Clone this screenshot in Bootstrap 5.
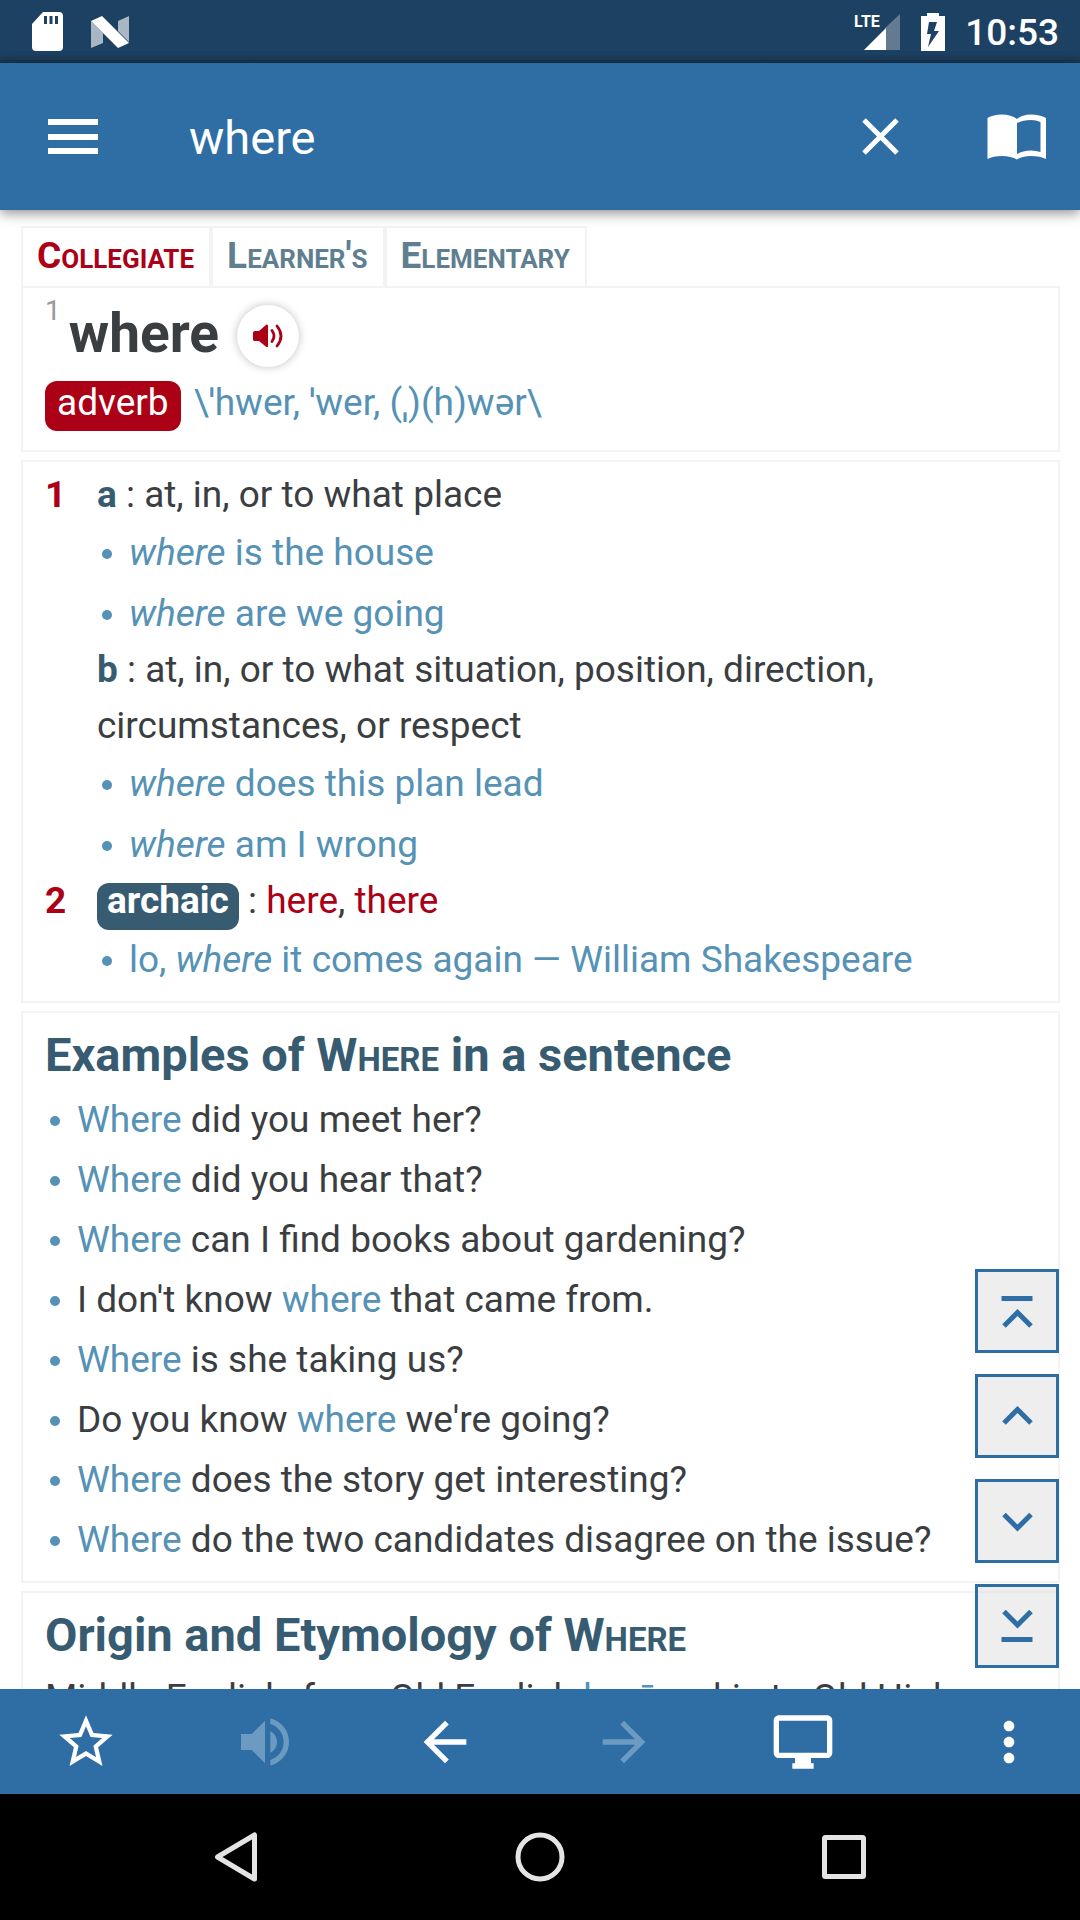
<!DOCTYPE html>
<html lang="en">
<head>
<meta charset="utf-8">
<meta name="viewport" content="width=device-width, initial-scale=1">
<title>where – Dictionary</title>
<link href="https://cdn.jsdelivr.net/npm/bootstrap@5.3.0/dist/css/bootstrap.min.css" rel="stylesheet">
<style>
:root { --app:#2e6ea5; --ink:#3b3e41; --soft:#5592b5; --deep:#375c71; --red:#ab0015; --rule:#f3f3f3; }
body { font-family: Roboto, "Noto Sans", sans-serif; font-size: 37px; line-height: 56px; color: var(--ink); background: #fff; }
svg { display: block; }
a { text-decoration: none; }
.statusbar { height: 63px; padding: 0 21px 0 32px; background: linear-gradient(#1d4162 54px, #19344e); color: #fff; }
.statusbar .battery { margin-left: 21px; }
.clock { font-size: 37px; line-height: 42px; font-weight: 500; padding-top: 2px; margin-left: 20px; }
.appbar { height: 147px; background: var(--app); box-shadow: 0 3px 12px rgba(0,0,0,.45); z-index: 2; padding: 0 25px 0 35px; }
.appbar .search, .appbar .search:focus { background: none; border: 0; box-shadow: none; color: #fff; font-size: 47px; line-height: 60px; padding: 2px 0 0; margin-left: 78px; }
.book { margin-left: 60px; }
.iconbtn { border: 0; padding: 0; background: none; color: #fff; }
.iconbtn:disabled { opacity: .3; border: 0; color: #fff; }
.reader { padding: 16px 20px 0 21px; }
.dict-tabs a { border: 2px solid var(--rule); border-bottom: 0; padding: 0 15px 0 14px; height: 60px; line-height: 56px; font-weight: 700; color: #5f7f90; }
.dict-tabs a.active { color: var(--red); }
.dict-tabs .caps { font-size: 26px; }
.caps { text-transform: uppercase; line-height: 1; }
.entry { border: 2px solid var(--rule); padding: 5px 22px 13px; margin-bottom: 8px; }
.entry-head { padding: 0 22px 19px; }
.headword { font-size: 55px; line-height: 66px; font-weight: 700; margin: 0 0 0 8px; padding-top: 12px; }
.homograph { font-size: 28px; line-height: 28px; color: #999; padding-top: 9px; }
.speak { width: 62px; height: 62px; border-radius: 50%; background: #fff; box-shadow: 0 0 8px rgba(0,0,0,.25); margin: 17px 0 0 18px; color: var(--red); border: 0; padding: 0; }
.tag { display: inline-block; border-radius: 12px; color: #fff; }
.tag-pos { background: var(--red); line-height: 44px; padding: 0 12px 6px; margin-right: 13px; }
.tag-usage { background: var(--deep); font-weight: 700; line-height: 36px; padding: 0 10px 11px; }
.pron { color: var(--soft); }
.sense-no { width: 52px; flex: none; color: var(--red); font-weight: 700; }
.sense b { color: var(--deep); }
.sense a { color: var(--red); }
.dots { list-style: none; margin: 0; padding: 1px 0 0; line-height: 57px; }
.dots li + li { margin-top: 4px; }
.dots-tight li + li { margin-top: 3px; }
.dots li::before { content: ""; display: inline-block; width: 10px; height: 10px; border-radius: 50%; background: var(--soft); margin: 0 17px 6px 5px; }
.dots em, .dots.quotes { color: var(--soft); }
.dots:not(.quotes) em { font-style: normal; }
.entry h2 { font-size: 47px; line-height: 60px; font-weight: 700; color: var(--deep); margin: 0 0 5px; padding-top: 7px; }
.entry h2 .caps { font-size: 33px; }
.jump { right: 21px; bottom: 21px; gap: 21px; z-index: 1; }
.jump button { width: 84px; height: 84px; padding: 0; border: 3px solid var(--app); border-radius: 0; background: rgba(221,221,221,.5); color: var(--app); }
.toolbar { height: 105px; background: var(--app); padding: 0 17px 0 32px; gap: 98px; }
.toolbar button { width: 108px; height: 105px; }
.sysnav { height: 126px; background: #000; padding: 0 84px; }
.sysnav button { flex: 1 1 0; height: 126px; }
</style>
<script src="https://cdn.jsdelivr.net/npm/bootstrap@5.3.0/dist/js/bootstrap.bundle.min.js"></script>
</head>
<body class="vh-100 d-flex flex-column overflow-hidden">

<div class="statusbar d-flex align-items-center flex-shrink-0">
  <svg width="31" height="39" viewBox="0 0 31 39" aria-hidden="true"><path fill="#fff" fill-rule="evenodd" d="M11 0H27a4 4 0 0 1 4 4V35a4 4 0 0 1-4 4H4a4 4 0 0 1-4-4V12zM12 4v8h3V4zM17.500 4v8h3V4zM23 4v8h3V4z"/></svg>
  <svg class="ms-4" width="46" height="32" viewBox="-4 0 46 32" aria-hidden="true"><path fill="#a9b7c5" d="M0 5L12 17V27L0 32zM27 5L38 0V26L27 15z"/><path fill="#fff" d="M0 5L11 0L38 27L27 32z"/></svg>
  <svg class="ms-auto" width="46" height="38" viewBox="0 0 46 38" aria-hidden="true"><path fill="#647a91" d="M46 1V37H31V15z"/><path fill="#fff" d="M10 37L32 15V37z"/><text x="0" y="14" fill="#fff" font-size="16" font-weight="700">LTE</text></svg>
  <svg class="battery" width="24" height="38" viewBox="0 0 24 38" aria-hidden="true"><path fill="#fff" fill-rule="evenodd" d="M6 0H18V3H24V38H0V3H6zM8 9L6 21H10L7 34L18 18H13L16 9z"/></svg>
  <span class="clock">10:53</span>
</div>

<header class="appbar d-flex align-items-center flex-shrink-0 position-relative">
  <button class="iconbtn" aria-label="Menu"><svg width="76" height="76" viewBox="0 0 76 76"><path fill="currentColor" d="M13 20h50v6H13zM13 35h50v6H13zM13 49h50v6H13z"/></svg></button>
  <input class="form-control search" type="text" value="where" aria-label="Search word">
  <button class="iconbtn" aria-label="Clear"><svg width="76" height="76" viewBox="0 0 76 76"><path stroke="currentColor" stroke-width="5" d="M21 21L54 54M54 21L21 54"/></svg></button>
  <button class="iconbtn book" aria-label="Open dictionary"><svg width="76" height="76" viewBox="0 0 76 76"><path fill="currentColor" fill-rule="evenodd" d="M8.500 19Q14 15.500 23 15.500Q32 15.500 38 20Q43 15.500 52 15.500Q61 15.500 67 19V60Q61 57 52 57Q43 57 38 60.500Q32 57 23 57Q14 57 8.500 60zM38 24V55Q44 51.500 52 51.500Q57 51.500 61.500 53V23Q57 21 52 21Q44 21 38 24z"/></svg></button>
</header>

<div class="flex-grow-1 position-relative overflow-hidden">
<main class="reader">
  <nav class="dict-tabs d-flex" aria-label="Dictionary">
    <a class="active" href="#" aria-current="page">C<span class="caps">ollegiate</span></a><a href="#">L<span class="caps">earner</span>'<span class="caps">s</span></a><a href="#">E<span class="caps">lementary</span></a>
  </nav>

  <section class="entry entry-head">
    <div class="d-flex">
      <span class="homograph">1</span>
      <h1 class="headword">where</h1>
      <button class="speak d-flex align-items-center justify-content-center" aria-label="Listen"><svg width="30" height="24" viewBox="0 0 30 24"><path fill="currentColor" d="M0 8.500Q0 7 2 7H6L13.500.5Q15 0 15 2V22Q15 24 13.500 23L6 17H2Q0 17 0 15.500z"/><path fill="none" stroke="currentColor" stroke-width="2.800" stroke-linecap="round" d="M19 6.500Q23 12 19 17.500M24 2Q32 12 24 22"/></svg></button>
    </div>
    <div class="d-flex align-items-baseline mt-2">
      <span class="tag tag-pos">adverb</span><span class="pron">\ˈhwer, ˈwer, (ˌ)(h)wər\</span>
    </div>
  </section>

  <section class="entry">
    <div class="d-flex sense">
      <span class="sense-no">1</span>
      <div class="flex-grow-1">
        <div><b>a</b> : at, in, or to what place</div>
        <ul class="dots quotes"><li><em>where</em> is the house</li><li><em>where</em> are we going</li></ul>
        <div><b>b</b> : at, in, or to what situation, position, direction, circumstances, or respect</div>
        <ul class="dots quotes"><li><em>where</em> does this plan lead</li><li><em>where</em> am I wrong</li></ul>
      </div>
    </div>
    <div class="d-flex sense">
      <span class="sense-no">2</span>
      <div class="flex-grow-1">
        <div><span class="tag tag-usage">archaic</span> : <a href="#">here</a>, <a href="#">there</a></div>
        <ul class="dots quotes"><li>lo, <em>where</em> it comes again — William Shakespeare</li></ul>
      </div>
    </div>
  </section>

  <section class="entry">
    <h2>Examples of W<span class="caps">here</span> in a sentence</h2>
    <ul class="dots dots-tight">
      <li><em>Where</em> did you meet her?</li>
      <li><em>Where</em> did you hear that?</li>
      <li><em>Where</em> can I find books about gardening?</li>
      <li>I don't know <em>where</em> that came from.</li>
      <li><em>Where</em> is she taking us?</li>
      <li>Do you know <em>where</em> we're going?</li>
      <li><em>Where</em> does the story get interesting?</li>
      <li><em>Where</em> do the two candidates disagree on the issue?</li>
    </ul>
  </section>

  <section class="entry">
    <h2>Origin and Etymology of W<span class="caps">here</span></h2>
    <p class="mb-0">Middle English, from Old English <span class="pron">hwǣr</span>; akin to Old High</p>
  </section>
</main>

<div class="jump position-absolute d-flex flex-column">
  <button class="btn" aria-label="Top"><svg width="78" height="78" viewBox="0 0 78 78"><path fill="none" stroke="currentColor" stroke-width="5" d="M23.500 26.500H54.500M26 54L39.500 40.500L53 54"/></svg></button>
  <button class="btn" aria-label="Up"><svg width="78" height="78" viewBox="0 0 78 78"><path fill="none" stroke="currentColor" stroke-width="5" d="M26 46L39.500 32.500L53 46"/></svg></button>
  <button class="btn" aria-label="Down"><svg width="78" height="78" viewBox="0 0 78 78"><path fill="none" stroke="currentColor" stroke-width="5" d="M26 32.500L39.500 46L53 32.500"/></svg></button>
  <button class="btn" aria-label="Bottom"><svg width="78" height="78" viewBox="0 0 78 78"><path fill="none" stroke="currentColor" stroke-width="5" d="M23.500 52.500H54.500M26 24.500L39.500 38L53 24.500"/></svg></button>
</div>
</div>

<footer class="toolbar d-flex flex-shrink-0">
  <div class="d-flex flex-grow-1 justify-content-between">
    <button class="iconbtn d-flex align-items-center justify-content-center" aria-label="Favorite"><svg width="64" height="64" viewBox="0 0 24 24"><path fill="currentColor" d="M22 9.240l-7.190-.620L12 2 9.190 8.630 2 9.240l5.460 4.730L5.820 21 12 17.270 18.180 21l-1.630-7.030L22 9.240zM12 15.400l-3.760 2.270 1-4.280-3.320-2.880 4.380-.380L12 6.100l1.710 4.040 4.380.380-3.320 2.880 1 4.280L12 15.400z"/></svg></button>
    <button class="iconbtn d-flex align-items-center justify-content-center" aria-label="Listen" disabled><svg width="64" height="64" viewBox="0 0 24 24"><path fill="currentColor" d="M3 9v6h4l5 5V4L7 9H3zm13.500 3c0-1.770-1.020-3.290-2.500-4.030v8.050c1.480-.730 2.500-2.250 2.500-4.020zM14 3.230v2.060c2.890.860 5 3.540 5 6.710s-2.110 5.850-5 6.710v2.060c4.010-.910 7-4.490 7-8.770s-2.990-7.860-7-8.770z"/></svg></button>
    <button class="iconbtn d-flex align-items-center justify-content-center" aria-label="Back"><svg width="64" height="64" viewBox="0 0 24 24"><path fill="currentColor" d="M20 11H7.830l5.590-5.590L12 4l-8 8 8 8 1.410-1.410L7.830 13H20v-2z"/></svg></button>
    <button class="iconbtn d-flex align-items-center justify-content-center" aria-label="Forward" disabled><svg width="64" height="64" viewBox="0 0 24 24"><path fill="currentColor" d="M12 4l-1.410 1.410L16.170 11H4v2h12.170l-5.580 5.590L12 20l8-8z"/></svg></button>
    <button class="iconbtn d-flex align-items-center justify-content-center" aria-label="Desktop view"><svg width="64" height="64" viewBox="0 0 24 24"><path fill="currentColor" d="M21 2H3c-1.100 0-2 .9-2 2v12c0 1.100.9 2 2 2h6v2H8v2h8v-2h-1v-2h6c1.100 0 2-.9 2-2V4c0-1.100-.9-2-2-2zm0 14H3V4h18v12z"/></svg></button>
  </div>
  <button class="iconbtn d-flex align-items-center justify-content-center" aria-label="More options"><svg width="64" height="64" viewBox="0 0 24 24"><path fill="currentColor" d="M12 8c1.100 0 2-.9 2-2s-.9-2-2-2-2 .9-2 2 .9 2 2 2zm0 2c-1.100 0-2 .9-2 2s.9 2 2 2 2-.9 2-2-.9-2-2-2zm0 6c-1.100 0-2 .9-2 2s.9 2 2 2 2-.9 2-2-.9-2-2-2z"/></svg></button>
</footer>

<nav class="sysnav d-flex flex-shrink-0" aria-label="System">
  <button class="iconbtn d-flex align-items-center justify-content-center" aria-label="System back"><svg width="50" height="56" viewBox="0 0 50 56"><path fill="none" stroke="#e4e4e4" stroke-width="5" stroke-linejoin="round" d="M43.500 6V50L6.500 28z"/></svg></button>
  <button class="iconbtn d-flex align-items-center justify-content-center" aria-label="Home"><svg width="56" height="56" viewBox="0 0 56 56"><circle cx="28" cy="28" r="22" fill="none" stroke="#e4e4e4" stroke-width="5"/></svg></button>
  <button class="iconbtn d-flex align-items-center justify-content-center" aria-label="Recent apps"><svg width="56" height="56" viewBox="0 0 56 56"><rect x="8.500" y="8.500" width="39" height="39" rx="1" fill="none" stroke="#e4e4e4" stroke-width="5" stroke-linejoin="round"/></svg></button>
</nav>
</body>
</html>
